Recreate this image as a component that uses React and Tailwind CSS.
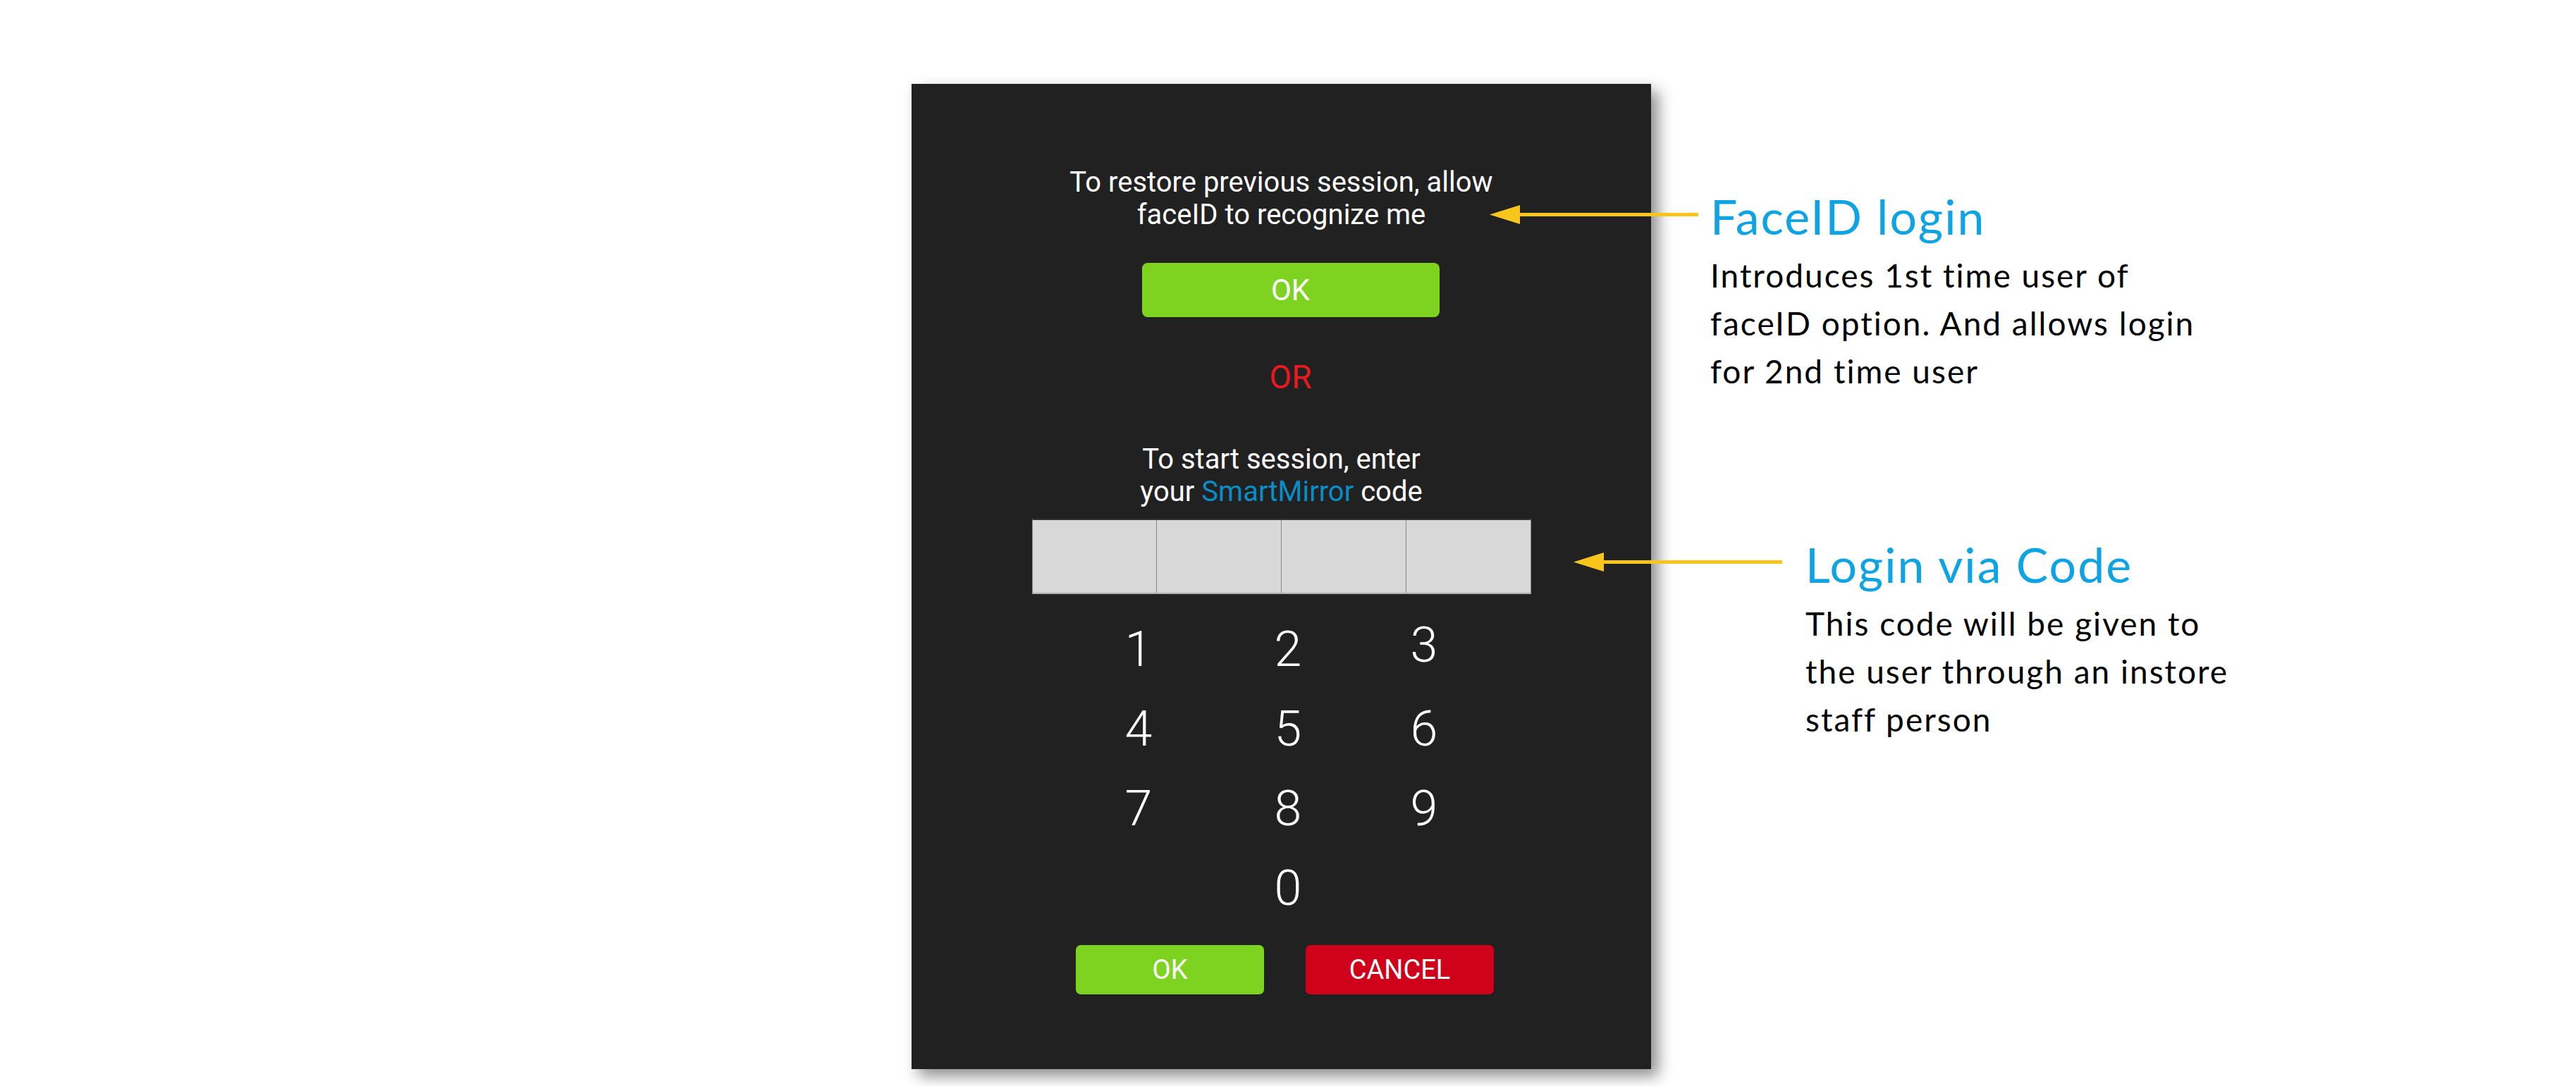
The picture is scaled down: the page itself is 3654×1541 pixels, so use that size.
const roboto = { fontFamily: 'Roboto, "Liberation Sans", sans-serif' };

function Arrow() {
  return (
    <svg width="296" height="27" viewBox="0 0 296 27" className="block shrink-0">
      <polygon points="0,13.5 43,0 43,27" fill="#f8c51c" />
      <rect x="42" y="11" width="254" height="5" fill="#f8c51c" />
    </svg>
  );
}

function Note({ title, lines }) {
  return (
    <div className="font-['Lato','Noto_Sans',sans-serif]">
      <h2 className="text-[68px] leading-[80px] tracking-[2px] text-[#0ea3e2] whitespace-nowrap">{title}</h2>
      <div className="mt-[10px] text-[46px] leading-[68px] tracking-[2px] text-black">
        {lines.map((l) => (
          <p key={l} className="whitespace-nowrap">{l}</p>
        ))}
      </div>
    </div>
  );
}

const rows = [
  ['1', '2', '3'],
  ['4', '5', '6'],
  ['7', '8', '9'],
  ['', '0', ''],
];

export default function App() {
  return (
    <div className="w-[3654px] h-[1541px] bg-white overflow-hidden flex items-start pl-[1293px] pt-[119px]">
      {/* Device panel */}
      <div
        className="w-[1049px] h-[1398px] shrink-0 bg-[#212121] shadow-[10px_10px_20px_rgba(0,0,0,0.45)] flex flex-col items-center pt-[117px] text-white"
        style={roboto}
      >
        <p className="text-[40px] leading-[46px] text-center">
          To restore previous session, allow
          <br />
          faceID to recognize me
        </p>
        <button className="mt-[45px] ml-[26px] w-[422px] h-[77px] rounded-[8px] bg-[#7ed321] text-[42px] leading-none flex items-center justify-center">
          OK
        </button>
        <p className="mt-[58px] ml-[26px] text-[46px] leading-[54px] text-[#e8191f]">OR</p>
        <p className="mt-[67px] text-[40px] leading-[46px] text-center">
          To start session, enter
          <br />
          your <span className="text-[#0a8dc7]">SmartMirror</span> code
        </p>
        <div className="mt-[15px] w-[708px] h-[107px] flex border-t-2 border-t-[#333333] border-b-2 border-b-[#adadad] border-x border-x-[#8a8a8a] bg-[#d8d8d8]">
          <div className="flex-1" />
          <div className="flex-1 border-l border-[#858585]" />
          <div className="flex-1 border-l border-[#858585]" />
          <div className="flex-1 border-l border-[#858585]" />
        </div>
        <div className="mt-[22px] flex flex-col font-light text-[70px] leading-[113px]">
          {rows.map((r, i) => (
            <div key={i} className="flex items-start">
              <span className="w-[100px] text-center">{r[0]}</span>
              <span className="ml-[112px] w-[100px] text-center">{r[1]}</span>
              <span className={`ml-[93px] w-[100px] text-center ${i === 0 ? '-mt-[6px]' : ''}`}>{r[2]}</span>
            </div>
          ))}
        </div>
        <div className="mt-[24px] ml-[10px] flex gap-[59px]">
          <button className="w-[267px] h-[70px] rounded-[7px] bg-[#7ed321] text-[38px] leading-none flex items-center justify-center">
            OK
          </button>
          <button className="w-[267px] h-[70px] rounded-[7px] bg-[#d0021b] text-[38px] leading-none flex items-center justify-center">
            CANCEL
          </button>
        </div>
      </div>

      {/* Annotations */}
      <div className="mt-[148px] flex flex-col">
        <div className="flex items-start ml-[-229px]">
          <div className="mt-[24px]">
            <Arrow />
          </div>
          <div className="ml-[17px]">
            <Note
              title="FaceID login"
              lines={['Introduces 1st time user of', 'faceID option. And allows login', 'for 2nd time user']}
            />
          </div>
        </div>
        <div className="mt-[200px] flex items-start ml-[-110px]">
          <div className="mt-[23px]">
            <Arrow />
          </div>
          <div className="ml-[33px]">
            <Note
              title="Login via Code"
              lines={['This code will be given to', 'the user through an instore', 'staff person']}
            />
          </div>
        </div>
      </div>
    </div>
  );
}
